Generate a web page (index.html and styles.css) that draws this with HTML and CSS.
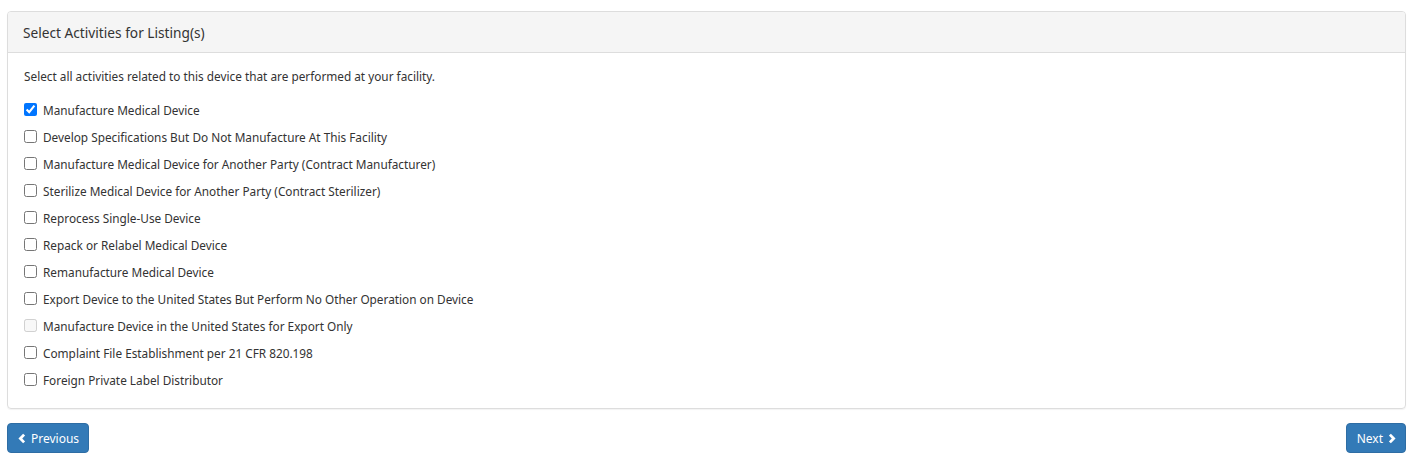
FILE: index.html
```html
<!DOCTYPE html>
<html>
<head>
<meta charset="utf-8">
<link rel="stylesheet" href="styles.css">
</head>
<body>
<div class="page">
  <div class="panel">
    <div class="panel-heading">Select Activities for Listing(s)</div>
    <div class="panel-body">
      <p class="intro">Select all activities related to this device that are performed at your facility.</p>
      <label class="check"><input type="checkbox" checked> Manufacture Medical Device</label>
      <label class="check"><input type="checkbox"> Develop Specifications But Do Not Manufacture At This Facility</label>
      <label class="check"><input type="checkbox"> Manufacture Medical Device for Another Party (Contract Manufacturer)</label>
      <label class="check"><input type="checkbox"> Sterilize Medical Device for Another Party (Contract Sterilizer)</label>
      <label class="check"><input type="checkbox"> Reprocess Single-Use Device</label>
      <label class="check"><input type="checkbox"> Repack or Relabel Medical Device</label>
      <label class="check"><input type="checkbox"> Remanufacture Medical Device</label>
      <label class="check"><input type="checkbox"> Export Device to the United States But Perform No Other Operation on Device</label>
      <label class="check"><input type="checkbox" disabled> Manufacture Device in the United States for Export Only</label>
      <label class="check"><input type="checkbox"> Complaint File Establishment per 21 CFR 820.198</label>
      <label class="check"><input type="checkbox"> Foreign Private Label Distributor</label>
    </div>
  </div>
  <div class="actions">
    <button class="btn"><svg class="chev" viewBox="0 0 8 12" width="8" height="11"><path d="M6.3 1.8 L2.2 6 L6.3 10.2" fill="none" stroke="#fff" stroke-width="3"/></svg>Previous</button>
    <button class="btn">Next<svg class="chev" viewBox="0 0 8 12" width="8" height="11"><path d="M1.7 1.8 L5.8 6 L1.7 10.2" fill="none" stroke="#fff" stroke-width="3"/></svg></button>
  </div>
</div>
</body>
</html>
```
FILE: styles.css
```css
* { box-sizing: border-box; }
body {
  margin: 0;
  font-family: "Noto Sans", "Noto Sans CJK KR", sans-serif;
  font-size: 11.8px;
  color: #333;
  background: #fff;
}
.page { padding: 11px 2px 0 7px; }
.panel {
  border: 1px solid #ddd;
  border-radius: 4px;
  box-shadow: 0 1px 1px rgba(0,0,0,0.05);
}
.panel-heading {
  background: #f5f5f5;
  border-bottom: 1px solid #ddd;
  border-radius: 3px 3px 0 0;
  height: 41px;
  padding: 0 15px;
  display: flex;
  align-items: center;
  font-size: 13.7px;
}
.panel-body {
  padding: 14px 15px 15px 16px;
}
.intro { margin: 0 0 11px; line-height: 18px; }
.check {
  display: flex;
  align-items: center;
  height: 27px;
}
.check input {
  margin: 0 6px 0 0;
  width: 13px;
  height: 13px;
}
.actions {
  display: flex;
  justify-content: space-between;
  margin-top: 14px;
}
.btn {
  background: #337ab7;
  border: 1px solid #2e6da4;
  border-radius: 4px;
  color: #fff;
  font-family: inherit;
  font-size: 12px;
  height: 30px;
  padding: 0 9px 0 10px;
  display: flex;
  align-items: center;
  gap: 5px;
}
```
